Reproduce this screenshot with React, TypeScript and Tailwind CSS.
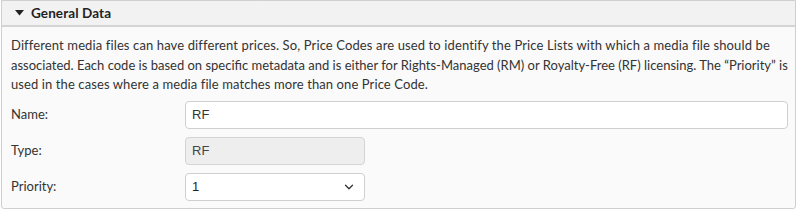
import { ChevronDown } from 'lucide-react';

export default function App() {
  return (
    <div className="w-[796px] h-[210px] bg-white font-['Lato',sans-serif] text-[13px] text-[#333]">
      <div className="border border-[#cfcfcf] rounded-b-[3px] bg-[#fafafa] h-[209px] ml-px">
        <div className="flex items-center gap-[7px] h-[26px] px-[13px] bg-[#f2f2f2] border-b-2 border-[#d4d4d4]">
          <svg width="9" height="6" viewBox="0 0 9 6">
            <path d="M0 0 L9 0 L4.5 5.5 Z" fill="#222" />
          </svg>
          <span className="font-bold text-[13.5px] tracking-[0.1px] text-[#222]">General Data</span>
        </div>
        <div className="px-[9px] pt-[9px]">
          <p className="leading-[19.5px] whitespace-nowrap">
            <span className="block tracking-[0.12px]">Different media files can have different prices. So, Price Codes are used to identify the Price Lists with which a media file should be</span>
            <span className="block">associated. Each code is based on specific metadata and is either for Rights-Managed (RM) or Royalty-Free (RF) licensing. The “Priority” is</span>
            <span className="block tracking-[0.1px]">used in the cases where a media file matches more than one Price Code.</span>
          </p>
          <div className="mt-[6px] flex flex-col gap-2">
            <div className="flex items-center">
              <label className="w-[174px]">Name:</label>
              <div className="flex-1 mr-[-2px] h-[28px] flex items-center px-[6px] bg-white border border-[#cfcfcf] rounded-[4px] font-['Liberation_Sans',sans-serif] text-[13px] text-[#333]">RF</div>
            </div>
            <div className="flex items-center">
              <label className="w-[174px]">Type:</label>
              <div className="w-[180px] h-[28px] flex items-center px-[6px] bg-[#eeeeee] border border-[#d4d4d4] rounded-[4px] font-['Liberation_Sans',sans-serif] text-[13px] text-[#444]">RF</div>
            </div>
            <div className="flex items-center">
              <label className="w-[174px]">Priority:</label>
              <div className="w-[180px] h-[28px] flex items-center justify-between pl-[6px] pr-[8px] bg-white border border-[#cfcfcf] rounded-[4px] font-['Liberation_Sans',sans-serif] text-[13px] text-[#222]">
                <span>1</span>
                <ChevronDown size={14} strokeWidth={2.2} className="text-[#333]" />
              </div>
            </div>
          </div>
        </div>
      </div>
    </div>
  );
}
